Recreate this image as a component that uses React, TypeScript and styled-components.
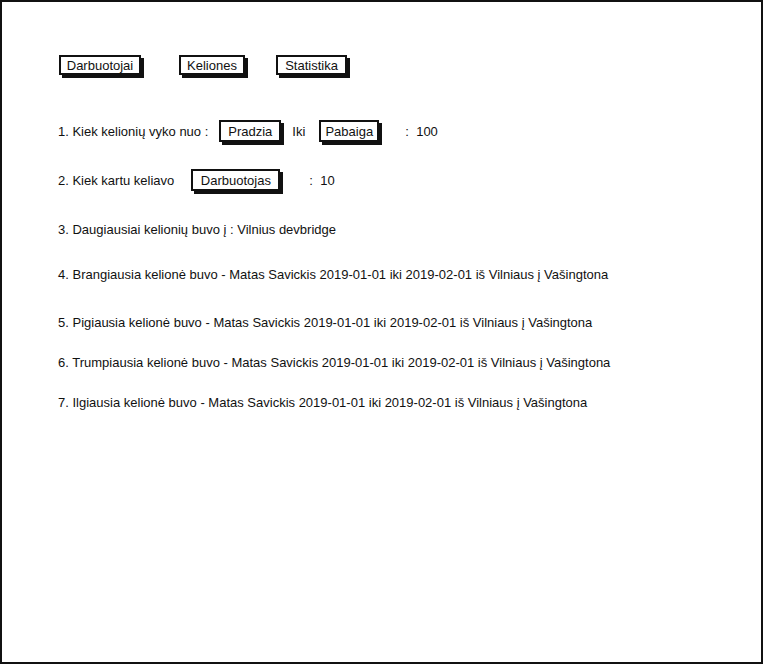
import styled, { createGlobalStyle } from "styled-components";

const GlobalStyle = createGlobalStyle`
  html, body {
    margin: 0;
    padding: 0;
    background: #ffffff;
  }

  body {
    font-family: "Liberation Sans", Arial, sans-serif;
    font-size: 13px;
    color: #111111;
  }
`;

const Frame = styled.div`
  box-sizing: border-box;
  width: 763px;
  height: 664px;
  border: 2px solid #111111;
  padding: 53px 0 0 56px;
`;

const Nav = styled.nav`
  display: flex;
  align-items: center;
`;

const SketchButton = styled.button<{ $w: number; $h?: number; $ml?: number }>`
  box-sizing: border-box;
  width: ${(p) => p.$w}px;
  height: ${(p) => p.$h ?? 20}px;
  margin: 0 0 0 ${(p) => p.$ml ?? 0}px;
  padding: 0;
  border: 2px solid #111111;
  background: #ffffff;
  box-shadow: 3px 3px 0 #111111;
  font-family: inherit;
  font-size: 13px;
  color: #111111;
  display: flex;
  align-items: center;
  justify-content: center;
  flex-shrink: 0;
`;

const Rows = styled.div`
  display: flex;
  flex-direction: column;
  margin-top: 45px;
`;

const Row = styled.div<{ $gap?: number }>`
  display: flex;
  align-items: center;
  height: 22px;
  margin-top: ${(p) => p.$gap ?? 0}px;
  white-space: nowrap;
`;

const Text = styled.span<{ $ml?: number }>`
  margin-left: ${(p) => p.$ml ?? 0}px;
`;

const trips = [
  { n: 4, word: "Brangiausia", gap: 23 },
  { n: 5, word: "Pigiausia", gap: 26 },
  { n: 6, word: "Trumpiausia", gap: 18 },
  { n: 7, word: "Ilgiausia", gap: 18 },
];

export default function App() {
  return (
    <>
      <GlobalStyle />
      <Frame>
        <Nav>
          <SketchButton $w={82} $ml={1}>Darbuotojai</SketchButton>
          <SketchButton $w={66} $ml={38}>Keliones</SketchButton>
          <SketchButton $w={71} $ml={31}>Statistika</SketchButton>
        </Nav>

        <Rows>
          <Row>
            <Text>1. Kiek kelionių vyko nuo :</Text>
            <SketchButton $w={62} $h={22} $ml={11}>Pradzia</SketchButton>
            <Text $ml={11}>Iki</Text>
            <SketchButton $w={60} $h={22} $ml={14}>Pabaiga</SketchButton>
            <Text $ml={26}>:&nbsp; 100</Text>
          </Row>

          <Row $gap={27}>
            <Text>2. Kiek kartu keliavo</Text>
            <SketchButton $w={89} $h={22} $ml={17}>Darbuotojas</SketchButton>
            <Text $ml={29}>:&nbsp; 10</Text>
          </Row>

          <Row $gap={27}>
            <Text>3. Daugiausiai kelionių buvo į : Vilnius devbridge</Text>
          </Row>

          {trips.map((t) => (
            <Row key={t.n} $gap={t.gap}>
              <Text>
                {t.n}. {t.word} kelionė buvo - Matas Savickis 2019-01-01 iki
                2019-02-01 iš Vilniaus į Vašingtona
              </Text>
            </Row>
          ))}
        </Rows>
      </Frame>
    </>
  );
}
